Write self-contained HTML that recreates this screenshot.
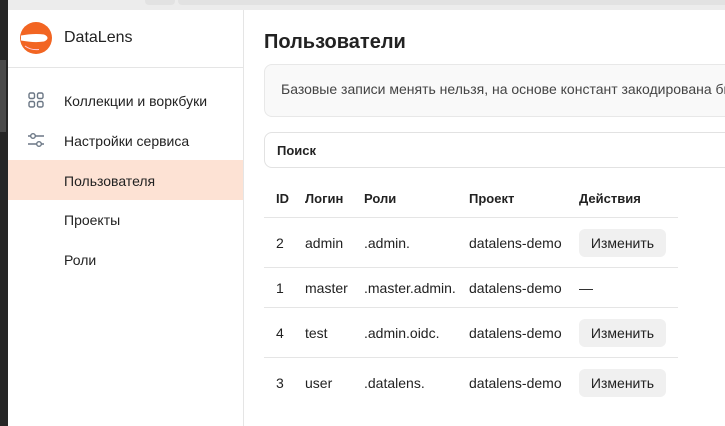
<!DOCTYPE html><html><head><meta charset="utf-8"><style>
body{margin:0;width:725px;height:426px;overflow:hidden;background:#fff;font-family:"Liberation Sans",sans-serif;position:relative;color:#222}
.a{position:absolute}
.t{font-size:14px;white-space:nowrap}
.th{font-size:13px;font-weight:bold;white-space:nowrap}
.btn{position:absolute;left:579px;width:87px;height:28px;background:#f0f0f0;border-radius:6px;font-size:14px;text-align:center;line-height:28px}
.hr{position:absolute;left:264px;width:414px;height:1px;background:#e5e5e5}
</style></head><body>
<div class="a" style="left:0;top:0;width:725px;height:10px;background:#ececec"></div>
<div class="a" style="left:145px;top:0;width:30px;height:5px;background:#e2e2e2;border-radius:0 0 4px 4px"></div>
<div class="a" style="left:178px;top:0;width:547px;height:5px;background:#e2e2e2;border-radius:0 0 0 4px"></div>
<div class="a" style="left:0;top:0;width:8px;height:426px;background:#262626"></div>
<div class="a" style="left:0;top:60px;width:6px;height:72px;background:#4a4a4a"></div>
<div class="a" style="left:243px;top:10px;width:1px;height:416px;background:#e5e5e5"></div>
<div class="a" style="left:8px;top:67px;width:235px;height:1px;background:#e5e5e5"></div>
<svg class="a" style="left:20px;top:22px" width="32" height="32" viewBox="0 0 32 32"><circle cx="16" cy="16" r="16" fill="#f26522"/><path d="M1 13.5 Q14 11 24 12.5 Q27.5 14 27.5 16 Q27.5 18 24 19.5 Q14 21 1 18.5 Z" fill="#fff"/><path d="M5 24 Q11 28.5 19 27.5" stroke="#fcd" stroke-width="1" fill="none"/></svg>
<div class="a" style="left:64px;top:29px;font-size:16px;color:#222">DataLens</div>
<svg class="a" style="left:28px;top:92px" width="16" height="16" viewBox="0 0 16 16" fill="none" stroke="#6b7785" stroke-width="1.4"><rect x="1" y="1" width="5.5" height="5.5" rx="1.5"/><rect x="9.5" y="1" width="5.5" height="5.5" rx="1.5"/><rect x="1" y="9.5" width="5.5" height="5.5" rx="1.5"/><rect x="9.5" y="9.5" width="5.5" height="5.5" rx="1.5"/></svg>
<div class="a t" style="left:64px;top:93px">Коллекции и воркбуки</div>
<svg class="a" style="left:27px;top:132px" width="18" height="16" viewBox="0 0 18 16" fill="none" stroke="#6b7785" stroke-width="1.4"><path d="M1 4H17M1 12H17"/><circle cx="6" cy="4" r="2.3" fill="#fff"/><circle cx="12" cy="12" r="2.3" fill="#fff"/></svg>
<div class="a t" style="left:64px;top:133px">Настройки сервиса</div>
<div class="a" style="left:8px;top:160px;width:235px;height:40px;background:#fde2d4"></div>
<div class="a t" style="left:64px;top:173px">Пользователя</div>
<div class="a t" style="left:64px;top:212px">Проекты</div>
<div class="a t" style="left:64px;top:252px">Роли</div>
<div class="a" style="left:264px;top:31px;font-size:20px;font-weight:bold;color:#222">Пользователи</div>
<div class="a" style="left:264px;top:64px;width:470px;height:51px;background:#f9f9f9;border:1px solid #e8e8e8;border-radius:8px;overflow:hidden"></div>
<div class="a t" style="left:281px;top:81px;color:#444;width:444px;overflow:hidden">Базовые записи менять нельзя, на основе констант закодирована бизнес-логика</div>
<div class="a" style="left:264px;top:132px;width:470px;height:34px;border:1px solid #e2e2e2;border-radius:8px"></div>
<div class="a th" style="left:277px;top:143px">Поиск</div>
<div class="a th" style="left:276px;top:191px">ID</div>
<div class="a th" style="left:305px;top:191px">Логин</div>
<div class="a th" style="left:364px;top:191px">Роли</div>
<div class="a th" style="left:469px;top:191px">Проект</div>
<div class="a th" style="left:579px;top:191px">Действия</div>
<div class="hr" style="top:217px"></div>
<div class="hr" style="top:267px"></div>
<div class="hr" style="top:307px"></div>
<div class="hr" style="top:357px"></div>
<div class="a t" style="left:276px;top:235px">2</div><div class="a t" style="left:305px;top:235px">admin</div><div class="a t" style="left:364px;top:235px">.admin.</div><div class="a t" style="left:469px;top:235px">datalens-demo</div><div class="btn" style="top:229px">Изменить</div>
<div class="a t" style="left:276px;top:280px">1</div><div class="a t" style="left:305px;top:280px">master</div><div class="a t" style="left:364px;top:280px">.master.admin.</div><div class="a t" style="left:469px;top:280px">datalens-demo</div><div class="a t" style="left:579px;top:280px">—</div>
<div class="a t" style="left:276px;top:325px">4</div><div class="a t" style="left:305px;top:325px">test</div><div class="a t" style="left:364px;top:325px">.admin.oidc.</div><div class="a t" style="left:469px;top:325px">datalens-demo</div><div class="btn" style="top:319px">Изменить</div>
<div class="a t" style="left:276px;top:375px">3</div><div class="a t" style="left:305px;top:375px">user</div><div class="a t" style="left:364px;top:375px">.datalens.</div><div class="a t" style="left:469px;top:375px">datalens-demo</div><div class="btn" style="top:369px">Изменить</div>
</body></html>
